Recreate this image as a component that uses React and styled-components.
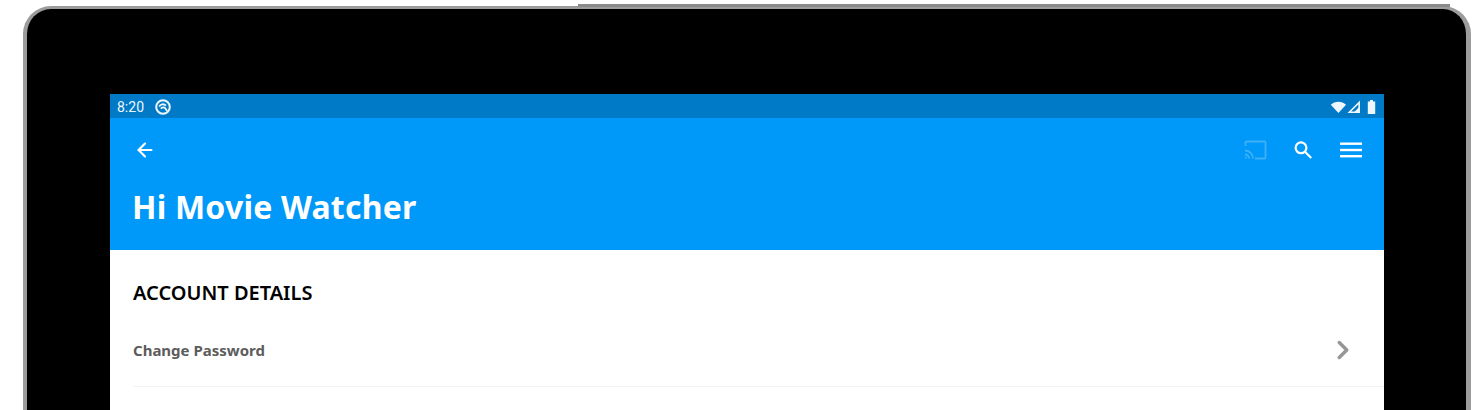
import styled, { createGlobalStyle } from "styled-components";
import { ArrowLeft, ChevronRight } from "lucide-react";

const GlobalStyle = createGlobalStyle`
  html, body {
    margin: 0;
    height: 410px;
    overflow: hidden;
    background: #fff;
  }
`;

const Page = styled.div`
  height: 410px;
  overflow: hidden;
  padding: 6px 7px 0 23px;
  box-sizing: border-box;
`;

const Device = styled.div`
  position: relative;
  height: 440px;
  box-sizing: border-box;
  padding: 85px 82px 0 83px;
  background: #000;
  border: solid #9c9c9c;
  border-width: 3px 5px 0 4px;
  border-radius: 28px 28px 0 0;
`;

const TopEdge = styled.span`
  position: absolute;
  top: -5px;
  left: 551px;
  right: 16px;
  height: 3px;
  background: #8a8a8a;
`;

const Screen = styled.div`
  display: flex;
  flex-direction: column;
  height: 100%;
  background: #fff;
  font-family: "Noto Sans", "Open Sans", sans-serif;
`;

const StatusBar = styled.div`
  display: flex;
  align-items: center;
  justify-content: space-between;
  height: 24px;
  padding: 2px 8px 0 7px;
  box-sizing: border-box;
  background: #007ac7;
  color: #eef7fd;
`;

const StatusGroup = styled.div`
  display: flex;
  align-items: center;
  gap: ${(p) => p.$gap}px;
`;

const Clock = styled.span`
  font-family: Roboto, sans-serif;
  font-size: 14px;
  line-height: 16px;
`;

const AppBar = styled.header`
  height: 132px;
  box-sizing: border-box;
  padding: 20px 21px 0 23px;
  background: #0099f9;
  color: #fff;
`;

const ToolRow = styled.div`
  display: flex;
  align-items: center;
  justify-content: space-between;
  height: 24px;
`;

const BackArrow = styled(ArrowLeft)`
  margin-left: 1px;
`;

const Actions = styled.div`
  display: flex;
  align-items: center;
  gap: 24px;
`;

const Title = styled.h1`
  margin: 23px 0 0 -1px;
  font-size: 32px;
  line-height: 44px;
  font-weight: 700;
  letter-spacing: 0.2px;
`;

const Section = styled.section`
  padding: 30px 0 0 23px;
`;

const SectionTitle = styled.h2`
  margin: 0;
  font-size: 20px;
  line-height: 26px;
  font-weight: 600;
  color: #000;
`;

const Row = styled.div`
  display: flex;
  align-items: center;
  justify-content: space-between;
  height: 72px;
  padding: 8px 26px 0 0;
  border-bottom: 1px solid #f3f3f3;
`;

const RowLabel = styled.span`
  font-size: 15px;
  font-weight: 700;
  color: #5c5c5c;
`;

const Battery = styled.svg`
  margin-left: 5px;
`;

const WifiIcon = () => (
  <svg width="16" height="16" viewBox="0 0 16 16" fill="currentColor">
    <path d="M8.4 14 0.8 5.8C2.8 3.9 5.5 2.8 8.4 2.8s5.6 1.1 7.6 3z" />
  </svg>
);

const SignalIcon = () => (
  <svg width="14" height="14" viewBox="0 0 14 14" fill="none" stroke="currentColor" strokeWidth="1.6">
    <path d="M12.2 2.4V12.2H2.4z" />
    <path d="M12.2 7V12.2H7z" fill="currentColor" stroke="none" />
  </svg>
);

const BatteryIcon = () => (
  <Battery width="9" height="14" viewBox="0 0 9 14" fill="currentColor">
    <path d="M3 0h3v1.4h2.2V14H0.8V1.4H3z" />
  </Battery>
);

const SyncBadge = () => (
  <svg width="16" height="16" viewBox="0 0 16 16" fill="none" stroke="currentColor">
    <circle cx="8" cy="8" r="6.8" strokeWidth="2" />
    <path d="M4.2 7.6C5.2 5 8.8 4.4 11 6.6" strokeWidth="1.8" />
    <path d="M6 9.8C7 8 9.2 8 10.2 9.2L12 11.8" strokeWidth="1.8" />
  </svg>
);

const CastIcon = () => (
  <svg width="24" height="24" viewBox="0 0 24 24" fill="none" stroke="#3fb0f8" strokeWidth="1.8">
    <path d="M2.5 8V4.5a1 1 0 0 1 1-1h18a1 1 0 0 1 1 1v15a1 1 0 0 1-1 1H12" />
    <path d="M2 12.5a8 8 0 0 1 8 8M2 16.5a4 4 0 0 1 4 4" />
    <circle cx="2.8" cy="19.8" r="1" fill="#3fb0f8" stroke="none" />
  </svg>
);

const SearchIcon = () => (
  <svg width="24" height="24" viewBox="0 0 24 24" fill="none" stroke="#fff" strokeWidth="2.2">
    <circle cx="10" cy="9.8" r="5.4" />
    <path d="m14 13.8 6.2 6.2" />
  </svg>
);

const MenuIcon = () => (
  <svg width="24" height="24" viewBox="0 0 24 24" fill="#fff">
    <rect x="1" y="4.5" width="22" height="2.4" />
    <rect x="1" y="10.8" width="22" height="2.4" />
    <rect x="1" y="17" width="22" height="2.4" />
  </svg>
);

export default function App() {
  return (
    <Page>
      <GlobalStyle />
      <Device>
        <TopEdge />
        <Screen>
          <StatusBar>
            <StatusGroup $gap={11}>
              <Clock>8:20</Clock>
              <SyncBadge />
            </StatusGroup>
            <StatusGroup $gap={1}>
              <WifiIcon />
              <SignalIcon />
              <BatteryIcon />
            </StatusGroup>
          </StatusBar>
          <AppBar>
            <ToolRow>
              <BackArrow size={22} strokeWidth={2.4} />
              <Actions>
                <CastIcon />
                <SearchIcon />
                <MenuIcon />
              </Actions>
            </ToolRow>
            <Title>Hi Movie Watcher</Title>
          </AppBar>
          <Section>
            <SectionTitle>ACCOUNT DETAILS</SectionTitle>
            <Row>
              <RowLabel>Change Password</RowLabel>
              <ChevronRight size={30} color="#969696" strokeWidth={2.8} />
            </Row>
          </Section>
        </Screen>
      </Device>
    </Page>
  );
}
